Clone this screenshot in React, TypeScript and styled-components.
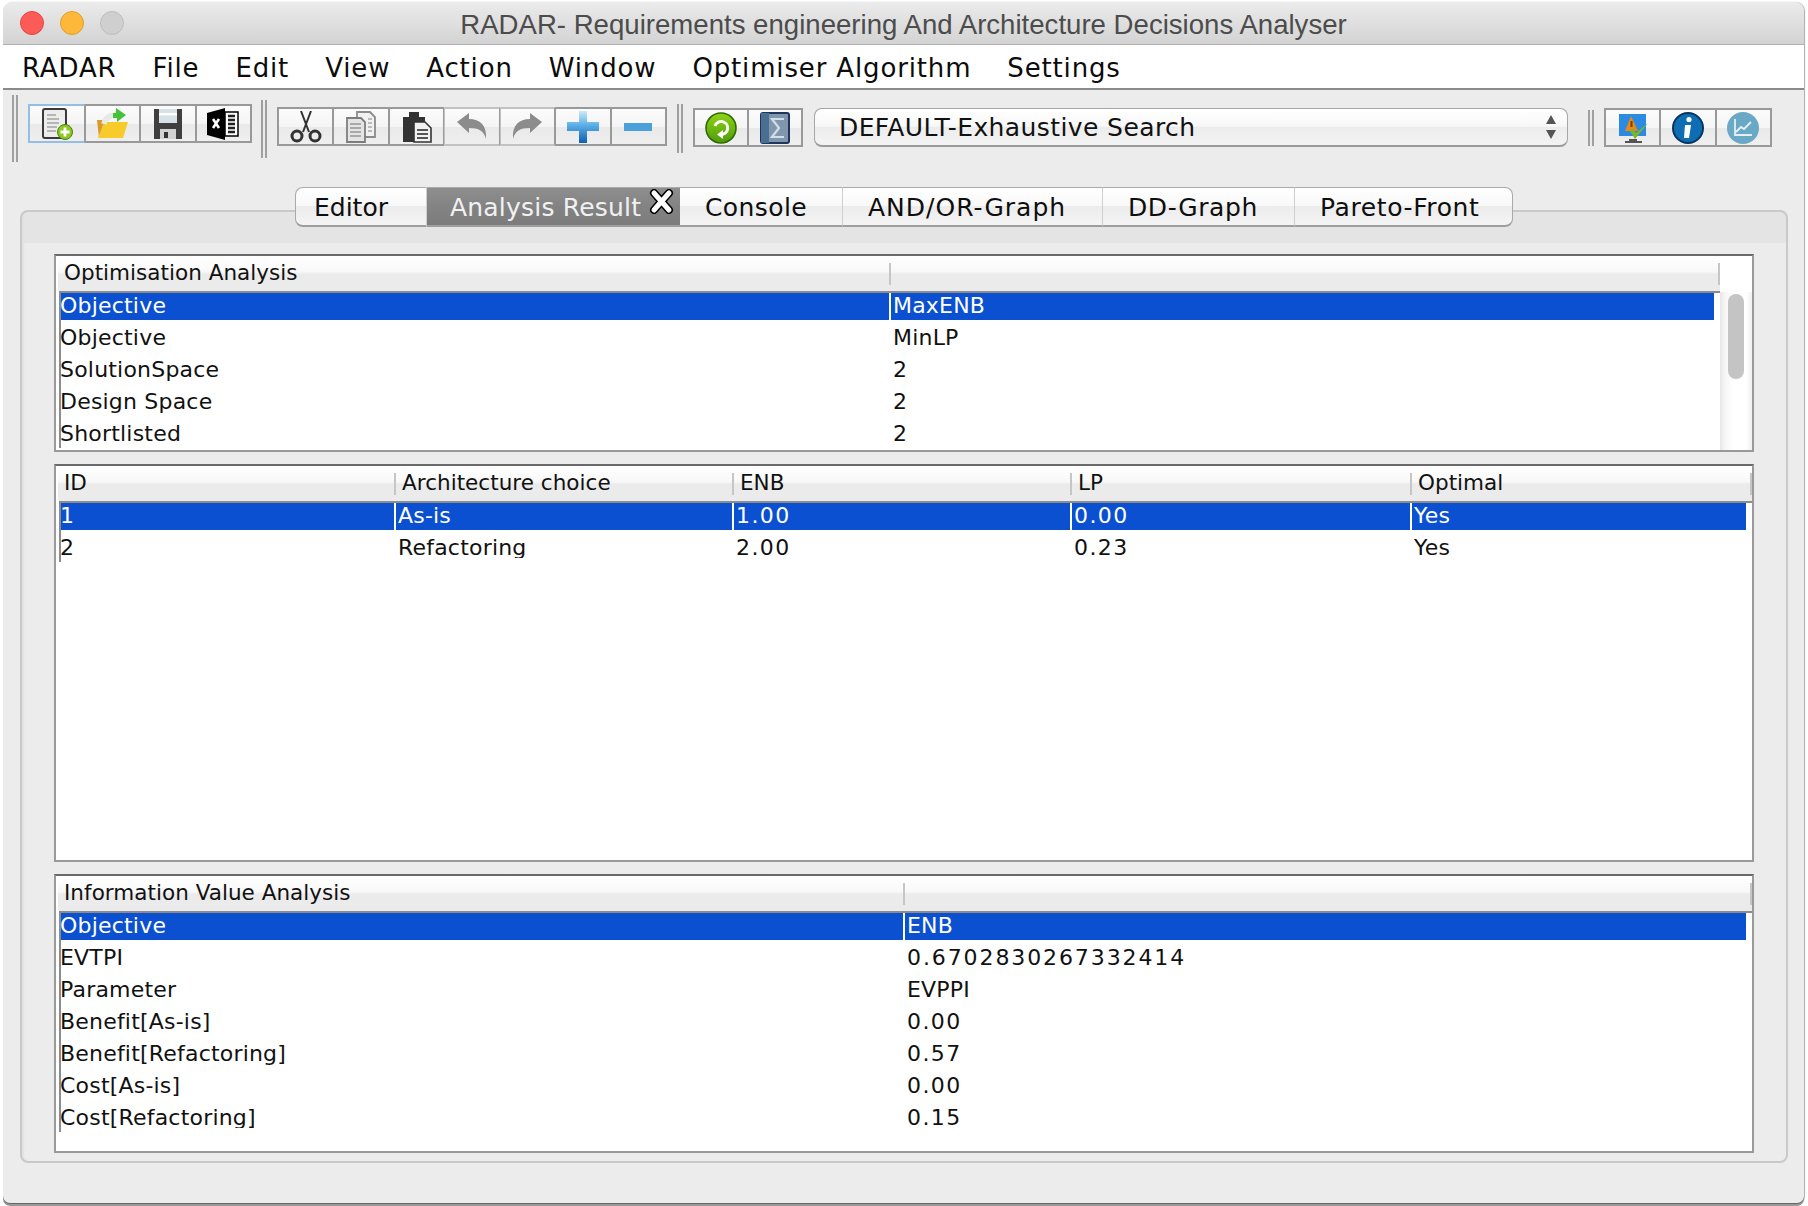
import React from "react";
import styled, { createGlobalStyle } from "styled-components";

const GlobalStyle = createGlobalStyle`
  html, body {
    margin: 0;
    padding: 0;
    background: #fff;
  }
  * {
    box-sizing: border-box;
  }
`;

const uiFont = `"DejaVu Sans", "Liberation Sans", sans-serif`;

const Page = styled.div`
  width: 1808px;
  height: 1206px;
  padding: 2px 4px 0 3px;
  overflow: hidden;
  font-family: ${uiFont};
  color: #111;
`;

const Window = styled.div`
  height: 1201px;
  background: #ececec;
  border-radius: 9px 9px 7px 7px;
  box-shadow: 0 1px 0 #666, 0 3px 0 #999, 1px 0 1px #aaa;
  overflow: hidden;
`;

const TitleBar = styled.div`
  height: 43px;
  display: grid;
  grid-template-columns: 1fr auto 1fr;
  align-items: center;
  padding-left: 17px;
  background: linear-gradient(#ebebeb, #d3d3d3);
  border-bottom: 1px solid #b1b1b1;
`;

const Lights = styled.div`
  display: flex;
  gap: 16px;
`;

const Light = styled.span<{ $fill: string; $edge: string }>`
  width: 24px;
  height: 24px;
  border-radius: 50%;
  background: ${(p) => p.$fill};
  border: 1px solid ${(p) => p.$edge};
`;

const Title = styled.div`
  margin: 3px 0 0 -17px;
  font-family: "Liberation Sans", Arial, sans-serif;
  font-size: 27.6px;
  color: #4c4c4c;
  white-space: nowrap;
`;

const MenuBar = styled.div`
  height: 45px;
  display: flex;
  align-items: center;
  gap: 36px;
  padding: 2px 0 0 19px;
  background: #fff;
  border-bottom: 2px solid #8a8a8a;
`;

const MenuItem = styled.span`
  font-size: 26px;
  letter-spacing: 0.85px;
  color: #0c0c0c;
`;

const Toolbar = styled.div`
  height: 97px;
  display: flex;
  align-items: flex-start;
  padding-left: 9px;
`;

const Grip = styled.span<{ $top: number; $height: number; $left: number }>`
  flex: none;
  width: 6px;
  height: ${(p) => p.$height}px;
  margin: ${(p) => p.$top}px 0 0 ${(p) => p.$left}px;
  border-left: 2px solid #a0a0a0;
  border-right: 2px solid #a0a0a0;
`;

const ButtonGroup = styled.div<{ $top: number; $width: number; $left: number }>`
  flex: none;
  display: flex;
  width: ${(p) => p.$width}px;
  height: 39px;
  margin: ${(p) => p.$top}px 0 0 ${(p) => p.$left}px;
`;

const ToolButton = styled.div<{ $tone?: "focus" | "dim" }>`
  flex: 1;
  display: flex;
  align-items: center;
  justify-content: center;
  background: linear-gradient(#fbfbfb 0, #f5f5f5 50%, #e9e9e9 52%, #efefef 100%);
  border: 2px solid ${(p) => (p.$tone === "focus" ? "#93bfe6" : p.$tone === "dim" ? "#c2c2c2" : "#999")};
  & + & {
    border-left-width: 1px;
  }
  &:not(:last-child) {
    border-right-width: 1px;
    border-right-color: #999;
  }
  svg {
    width: 32px;
    height: 32px;
    flex: none;
  }
`;

const Combo = styled.div`
  flex: none;
  display: flex;
  align-items: center;
  justify-content: space-between;
  width: 754px;
  height: 39px;
  margin: 18px 0 0 11px;
  padding: 0 10px 0 24px;
  border: 1px solid #a6a6a6;
  border-bottom: 2px solid #9a9a9a;
  border-radius: 8px;
  background: linear-gradient(#fff 0, #f8f8f8 48%, #ececec 50%, #f3f3f3 100%);
  font-size: 25px;
  letter-spacing: 0.4px;
`;

const ComboArrows = styled.svg`
  width: 12px;
  height: 26px;
`;

const TabRow = styled.div`
  position: relative;
  z-index: 1;
  display: flex;
  width: 1218px;
  height: 40px;
  margin: 0 0 -17px 292px;
`;

const Tab = styled.div<{ $width: number; $spacing: number; $active?: boolean; $first?: boolean; $last?: boolean }>`
  flex: none;
  display: flex;
  align-items: center;
  justify-content: space-between;
  width: ${(p) => p.$width}px;
  padding: 1px 6px 0 ${(p) => (p.$active ? 23 : p.$first ? 18 : 25)}px;
  font-size: 25px;
  letter-spacing: ${(p) => p.$spacing}px;
  white-space: nowrap;
  color: ${(p) => (p.$active ? "#f1f1f1" : "#0e0e0e")};
  background: ${(p) =>
    p.$active
      ? "linear-gradient(#8e8e8e, #838383 50%, #7c7c7c)"
      : "linear-gradient(#fff 0, #f8f8f8 48%, #ececec 50%, #f4f4f4 100%)"};
  border-top: 1px solid #aaa;
  border-bottom: 2px solid #9e9e9e;
  border-left: ${(p) => (p.$first ? "1px solid #aaa" : "none")};
  border-right: ${(p) => (p.$last ? "1px solid #aaa" : p.$active ? "none" : "1px solid #cfcfcf")};
  border-radius: ${(p) => (p.$first ? "8px 0 0 8px" : p.$last ? "0 8px 8px 0" : "0")};
`;

const Panel = styled.div`
  width: 1768px;
  height: 953px;
  margin-left: 17px;
  padding: 42px 0 0 32px;
  display: flex;
  flex-direction: column;
  gap: 12px;
  border: 2px solid #c9c9c9;
  border-radius: 8px;
  background: linear-gradient(#e4e4e4 0, #e4e4e4 31px, #ececec 31px);
  box-shadow: inset 3px 0 2px -1px #e2e2e2;
`;

const TableFrame = styled.div<{ $height: number }>`
  flex: none;
  display: flex;
  width: 1700px;
  height: ${(p) => p.$height}px;
  padding-left: 2px;
  background: #fff;
  border: 2px solid #999;
  border-top-color: #6a6a6a;
  overflow: hidden;
`;

const TableMain = styled.div`
  flex: 1;
  min-width: 0;
  display: flex;
  flex-direction: column;
`;

const HeaderRow = styled.div`
  flex: none;
  display: flex;
  align-items: center;
  height: 35px;
  background: linear-gradient(#fff 0, #f8f8f8 45%, #ebebeb 52%, #ebebeb 100%);
`;

const HeaderCell = styled.div<{ $width?: number }>`
  flex: ${(p) => (p.$width ? `none` : 1)};
  width: ${(p) => (p.$width ? `${p.$width}px` : "auto")};
  height: 22px;
  line-height: 20px;
  padding-left: 6px;
  border-right: 2px solid #c6c6c6;
  font-size: 21.5px;
  letter-spacing: 0.03px;
  white-space: nowrap;
`;

const TableBody = styled.div`
  align-self: flex-start;
  width: calc(100% - 1px);
  margin-left: 1px;
  padding-right: 6px;
  border-top: 2px solid #8c8c8c;
  border-left: 2px solid #8c8c8c;
`;

const Row = styled.div<{ $selected?: boolean }>`
  display: flex;
  height: 27px;
  margin-bottom: 5px;
  background: ${(p) => (p.$selected ? "#0a50d1" : "#fff")};
  color: ${(p) => (p.$selected ? "#fff" : "#111")};
  &:last-child {
    height: 23px;
    overflow: hidden;
    margin-bottom: 4px;
  }
`;

const Cell = styled.div<{ $width?: number; $spacing: number }>`
  flex: ${(p) => (p.$width ? "none" : 1)};
  width: ${(p) => (p.$width ? `${p.$width}px` : "auto")};
  line-height: 26px;
  font-size: 22px;
  letter-spacing: ${(p) => p.$spacing}px;
  white-space: nowrap;
  &:first-child {
    text-indent: -1px;
  }
  & + & {
    padding-left: 2px;
    border-left: 2px solid #fff;
  }
`;

const ScrollTrack = styled.div`
  flex: none;
  width: 32px;
  margin-top: 36px;
  padding: 2px 8px 0;
  background: linear-gradient(90deg, #e6e6e6 0, #f6f6f6 5px, #fff 14px, #fff 26px, #f0f0f0 100%);
`;

const ScrollThumb = styled.div`
  height: 85px;
  border-radius: 8px;
  background: #c4c4c4;
`;

type TableSpec = {
  height: number;
  headers: string[];
  widths: number[];
  rows: string[][];
  scroll?: boolean;
};

const optimisation: TableSpec = {
  height: 198,
  headers: ["Optimisation Analysis", ""],
  widths: [828],
  scroll: true,
  rows: [
    ["Objective", "MaxENB"],
    ["Objective", "MinLP"],
    ["SolutionSpace", "2"],
    ["Design Space", "2"],
    ["Shortlisted", "2"],
  ],
};

const choices: TableSpec = {
  height: 398,
  headers: ["ID", "Architecture choice", "ENB", "LP", "Optimal"],
  widths: [333, 338, 338, 340],
  rows: [
    ["1", "As-is", "1.00", "0.00", "Yes"],
    ["2", "Refactoring", "2.00", "0.23", "Yes"],
  ],
};

const information: TableSpec = {
  height: 279,
  headers: ["Information Value Analysis", ""],
  widths: [842],
  rows: [
    ["Objective", "ENB"],
    ["EVTPI", "0.6702830267332414"],
    ["Parameter", "EVPPI"],
    ["Benefit[As-is]", "0.00"],
    ["Benefit[Refactoring]", "0.57"],
    ["Cost[As-is]", "0.00"],
    ["Cost[Refactoring]", "0.15"],
  ],
};

const headerWidth = (spec: TableSpec, i: number) => {
  const w = spec.widths[i];
  if (!w) return undefined;
  return i === 0 ? w + 5 : w;
};

// digits sit wider apart than letters in the original
const cellSpacing = (text: string) => {
  if (!/^[\d.]+$/.test(text)) return 0.2;
  return text.length > 6 ? 1.9 : 1.4;
};

const DataTable = ({ spec }: { spec: TableSpec }) => (
  <TableFrame $height={spec.height}>
    <TableMain>
      <HeaderRow>
        {spec.headers.map((h, i) => (
          <HeaderCell key={i} $width={headerWidth(spec, i)}>
            {h}
          </HeaderCell>
        ))}
      </HeaderRow>
      <TableBody>
        {spec.rows.map((row, r) => (
          <Row key={r} $selected={r === 0}>
            {row.map((c, i) => (
              <Cell key={i} $width={spec.widths[i]} $spacing={cellSpacing(c)}>
                {c}
              </Cell>
            ))}
          </Row>
        ))}
      </TableBody>
    </TableMain>
    {spec.scroll && (
      <ScrollTrack>
        <ScrollThumb />
      </ScrollTrack>
    )}
  </TableFrame>
);

const NewIcon = () => (
  <svg viewBox="0 0 32 32">
    <rect x="2" y="1" width="23" height="29" rx="2" fill="#ececec" stroke="#3a3a3a" strokeWidth="2" />
    <path d="M6 7h9M6 11h12M6 15h12M6 19h10M6 23h9" stroke="#b5b5b5" strokeWidth="2.2" />
    <circle cx="24" cy="24" r="7.5" fill="#8cc81e" stroke="#4c7d16" />
    <path d="M24 19.5v9M19.5 24h9" stroke="#fff" strokeWidth="2.8" />
  </svg>
);

const OpenIcon = () => (
  <svg viewBox="0 0 32 32">
    <path d="M1 12h7l2 3v15H3z" fill="#d99a2b" />
    <path d="M8 30H2l6-16h24l-5 16z" fill="#f6cb2a" />
    <path d="M8 16c1-6 6-9 13-9" fill="none" stroke="#e4ebe6" strokeWidth="5.5" />
    <path d="M20 0l10 7-9 7v-4h-4V5h3z" fill="#45c13a" />
  </svg>
);

const SaveIcon = () => (
  <svg viewBox="0 0 32 32">
    <path d="M2 1h28v30H2z" fill="#3f3f3f" />
    <rect x="7" y="1" width="18" height="14" fill="#d7e1e8" />
    <rect x="7" y="5" width="18" height="2.4" fill="#fff" />
    <rect x="8" y="21" width="16" height="10" fill="#d2d2d2" />
    <rect x="12" y="24" width="4" height="6" fill="#333" />
  </svg>
);

const ExcelIcon = () => (
  <svg viewBox="0 0 32 32">
    <path d="M0 5l18-5v32L0 27z" fill="#000" />
    <path d="M18 4h13v24H18z" fill="#fff" stroke="#000" strokeWidth="1.5" />
    <path d="M21 8h7M21 12h7M21 16h7M21 20h7M21 24h7" stroke="#222" strokeWidth="2.4" />
    <path d="M6 11l6 9M12 11l-6 9" stroke="#fff" strokeWidth="2.6" />
  </svg>
);

const CutIcon = () => (
  <svg viewBox="0 0 32 32">
    <g fill="none" stroke="#333">
      <path d="M11 0l8 21M21 0l-8 21" strokeWidth="2" />
      <circle cx="7" cy="25" r="5" strokeWidth="3" />
      <circle cx="25" cy="25" r="5" strokeWidth="3" />
    </g>
  </svg>
);

const CopyIcon = () => (
  <svg viewBox="0 0 32 32">
    <path d="M12 1h13l5 5v20H12z" fill="#f1f1f1" stroke="#8b8b8b" strokeWidth="1.8" />
    <path d="M2 7h14l4 4v20H2z" fill="#e4e4e4" stroke="#7d7d7d" strokeWidth="1.8" />
    <path d="M5 13h11M5 17h11M5 21h11M5 25h11" stroke="#a9a9a9" strokeWidth="2.2" />
    <path d="M23 8h4M23 12h4M23 16h4M23 20h4" stroke="#bbb" strokeWidth="2" />
  </svg>
);

const PasteIcon = () => (
  <svg viewBox="0 0 32 32">
    <path d="M2 6h6V1h10v5h6v25H2z" fill="#333" />
    <path d="M13 11h11l6 6v14H13z" fill="#f1f1f1" stroke="#333" strokeWidth="1.6" />
    <path d="M16 19h11M16 23h11M16 27h11" stroke="#555" strokeWidth="2.2" />
  </svg>
);

const UndoIcon = () => (
  <svg viewBox="0 0 32 32">
    <path d="M1 11L13 2v6c11 0 18 6 17 20-2-8-7-11-17-11v5z" fill="#8c8c8c" />
  </svg>
);

const RedoIcon = () => (
  <svg viewBox="0 0 32 32">
    <path d="M31 11L19 2v6C8 8 1 14 2 28c2-8 7-11 17-11v5z" fill="#8c8c8c" />
  </svg>
);

const PlusIcon = () => (
  <svg viewBox="0 0 32 32">
    <defs>
      <linearGradient id="plusFill" x1="0" y1="0" x2="0" y2="1">
        <stop offset="0" stopColor="#cfe9fb" />
        <stop offset="0.45" stopColor="#5aaee6" />
        <stop offset="1" stopColor="#0d5fb0" />
      </linearGradient>
    </defs>
    <path d="M12 0h8v11h12v9H20v12h-8V20H0v-9h12z" fill="url(#plusFill)" />
  </svg>
);

const MinusIcon = () => (
  <svg viewBox="0 0 32 32">
    <rect x="2" y="12" width="28" height="8" fill="#4b9fdb" />
  </svg>
);

const RefreshIcon = () => (
  <svg viewBox="0 0 32 32">
    <defs>
      <linearGradient id="refreshFill" x1="0" y1="0" x2="0" y2="1">
        <stop offset="0" stopColor="#8fd414" />
        <stop offset="1" stopColor="#4f9c0b" />
      </linearGradient>
    </defs>
    <circle cx="16" cy="16" r="15" fill="url(#refreshFill)" stroke="#2f6b08" strokeWidth="1.6" />
    <path d="M10 14a6.5 6.5 0 1 1 6 8.5" fill="none" stroke="#fff" strokeWidth="3" />
    <path d="M18 18v9l-6-4.5z" fill="#fff" />
  </svg>
);

const SigmaIcon = () => (
  <svg viewBox="0 0 32 32">
    <rect x="2" y="1" width="28" height="30" rx="2" fill="#7f96ad" stroke="#1f3560" strokeWidth="2" />
    <rect x="2" y="1" width="8" height="30" fill="#4a6f92" />
    <path d="M25 7H13l7 9-7 9h12" fill="none" stroke="#d3dde5" strokeWidth="2.2" />
  </svg>
);

const MonitorIcon = () => (
  <svg viewBox="0 0 32 32">
    <rect x="2" y="2" width="27" height="22" fill="#2b8be3" />
    <path d="M12 27h8v2h5v2H8v-2h4z" fill="#555" />
    <path d="M14 4l7 15H8z" fill="#e58a16" />
    <path d="M13.5 9h2v6h-2z" fill="#7a3d08" />
    <path d="M13 19l5 8 13-16-12 10-3-4z" fill="#79b62a" />
  </svg>
);

const InfoIcon = () => (
  <svg viewBox="0 0 32 32">
    <circle cx="16" cy="16" r="15" fill="#0f6db4" stroke="#06365f" strokeWidth="2" />
    <circle cx="17" cy="7.5" r="2.6" fill="#fff" />
    <path d="M13 13h6l-2 13h-5z" fill="#fff" />
  </svg>
);

const ChartIcon = () => (
  <svg viewBox="0 0 32 32">
    <circle cx="16" cy="16" r="16" fill="#6aa9c6" />
    <path d="M8 7v16h17" fill="none" stroke="#e4f0f5" strokeWidth="1.8" />
    <path d="M9 20l5-5 3 2 7-7" fill="none" stroke="#e4f0f5" strokeWidth="1.8" />
  </svg>
);

const CloseMark = styled.svg`
  flex: none;
  width: 25px;
  height: 25px;
  margin-top: -12px;
`;

const menus = ["RADAR", "File", "Edit", "View", "Action", "Window", "Optimiser Algorithm", "Settings"];

const tabs = [
  { label: "Editor", width: 132, spacing: 0 },
  { label: "Analysis Result", width: 253, spacing: 0.2, active: true },
  { label: "Console", width: 163, spacing: 0.4 },
  { label: "AND/OR-Graph", width: 260, spacing: 1 },
  { label: "DD-Graph", width: 192, spacing: 0.6 },
  { label: "Pareto-Front", width: 218, spacing: 0.6 },
];

const App = () => (
  <>
    <GlobalStyle />
    <Page>
      <Window>
        <TitleBar>
          <Lights>
            <Light $fill="#fc5b57" $edge="#e2463f" />
            <Light $fill="#fdb83b" $edge="#e09e2a" />
            <Light $fill="#cfcfcf" $edge="#bdbdbd" />
          </Lights>
          <Title>RADAR- Requirements engineering And Architecture Decisions Analyser</Title>
        </TitleBar>
        <MenuBar>
          {menus.map((m) => (
            <MenuItem key={m}>{m}</MenuItem>
          ))}
        </MenuBar>
        <Toolbar>
          <Grip $top={5} $height={67} $left={0} />
          <ButtonGroup $top={14} $width={224} $left={10}>
            <ToolButton $tone="focus"><NewIcon /></ToolButton>
            <ToolButton><OpenIcon /></ToolButton>
            <ToolButton><SaveIcon /></ToolButton>
            <ToolButton><ExcelIcon /></ToolButton>
          </ButtonGroup>
          <Grip $top={10} $height={58} $left={9} />
          <ButtonGroup $top={17} $width={390} $left={10}>
            <ToolButton><CutIcon /></ToolButton>
            <ToolButton><CopyIcon /></ToolButton>
            <ToolButton><PasteIcon /></ToolButton>
            <ToolButton $tone="dim"><UndoIcon /></ToolButton>
            <ToolButton $tone="dim"><RedoIcon /></ToolButton>
            <ToolButton><PlusIcon /></ToolButton>
            <ToolButton><MinusIcon /></ToolButton>
          </ButtonGroup>
          <Grip $top={14} $height={49} $left={10} />
          <ButtonGroup $top={18} $width={110} $left={10}>
            <ToolButton><RefreshIcon /></ToolButton>
            <ToolButton><SigmaIcon /></ToolButton>
          </ButtonGroup>
          <Combo>
            DEFAULT-Exhaustive Search
            <ComboArrows viewBox="0 0 12 26">
              <path d="M6 1l5 9H1zM6 25l5-9H1z" fill="#555" />
            </ComboArrows>
          </Combo>
          <Grip $top={20} $height={36} $left={20} />
          <ButtonGroup $top={18} $width={168} $left={10}>
            <ToolButton><MonitorIcon /></ToolButton>
            <ToolButton><InfoIcon /></ToolButton>
            <ToolButton><ChartIcon /></ToolButton>
          </ButtonGroup>
        </Toolbar>
        <TabRow>
          {tabs.map((t, i) => (
            <Tab
              key={t.label}
              $width={t.width}
              $spacing={t.spacing}
              $active={t.active}
              $first={i === 0}
              $last={i === tabs.length - 1}
            >
              {t.label}
              {t.active && (
                <CloseMark viewBox="0 0 25 25">
                  <path d="M5 4l15 17M20 4L5 21" stroke="#000" strokeWidth="8" strokeLinecap="round" />
                  <path d="M5 4l15 17M20 4L5 21" stroke="#fff" strokeWidth="5" strokeLinecap="round" />
                </CloseMark>
              )}
            </Tab>
          ))}
        </TabRow>
        <Panel>
          <DataTable spec={optimisation} />
          <DataTable spec={choices} />
          <DataTable spec={information} />
        </Panel>
      </Window>
    </Page>
  </>
);

export default App;
